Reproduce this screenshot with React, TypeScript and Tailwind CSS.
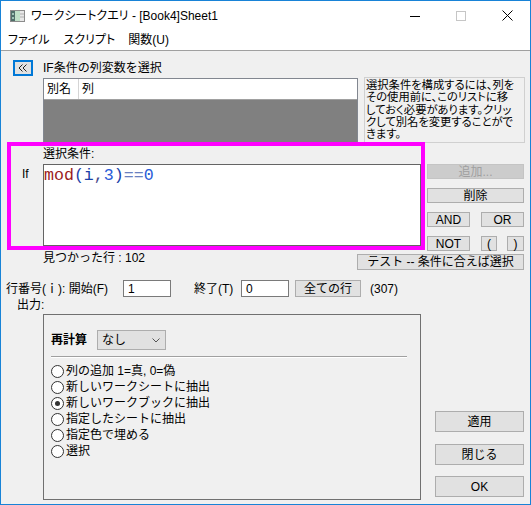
import React from "react";

const ui = "font-['Liberation_Sans','Noto_Sans_CJK_JP',sans-serif]";
const btn =
  "flex items-center justify-center bg-[#e1e1e1] border border-[#adadad] leading-none text-[12px] text-black";

function Radio({ checked, label }: { checked?: boolean; label: string }) {
  return (
    <div className="h-[16px] flex items-center">
      <span className="w-[13px] h-[13px] rounded-full border border-[#333333] bg-white flex items-center justify-center shrink-0">
        {checked && <span className="w-[5px] h-[5px] rounded-full bg-[#333333]" />}
      </span>
      <span className="ml-[2px] leading-none whitespace-nowrap">{label}</span>
    </div>
  );
}

function SheetIcon() {
  return (
    <svg width="15" height="12" viewBox="0 0 15 12">
      <rect x="0.5" y="0.5" width="14" height="11" fill="#f4f4f4" stroke="#8c8c8c" />
      <rect x="1" y="1" width="4" height="10" fill="#4f6f6a" />
      <rect x="2" y="3" width="2" height="2" fill="#9fc3b6" />
      <rect x="2" y="7" width="2" height="2" fill="#9fc3b6" />
      <rect x="5" y="1" width="5" height="10" fill="#bfe0c8" />
      <rect x="10" y="1" width="4" height="10" fill="#e8e8e8" />
      <line x1="10" y1="4" x2="14" y2="4" stroke="#b0b0b0" />
      <line x1="10" y1="7" x2="14" y2="7" stroke="#b0b0b0" />
    </svg>
  );
}

export default function App() {
  return (
    <div
      className={`relative w-[531px] h-[505px] border border-[#1883d7] bg-[#f0f0f0] text-[12px] text-black overflow-hidden flex flex-col ${ui}`}
    >
      {/* title bar */}
      <div className="h-[29px] shrink-0 bg-white flex items-center">
        <span className="ml-[9px] flex">
          <SheetIcon />
        </span>
        <span className="ml-[6px] leading-none whitespace-nowrap [font-feature-settings:'palt']">
          ワークシートクエリ - [Book4]Sheet1
        </span>
        <div className="ml-auto h-full flex">
          <div className="w-[46px] h-full flex items-center justify-center">
            <svg width="10" height="10" viewBox="0 0 10 10">
              <line x1="0" y1="5.5" x2="10" y2="5.5" stroke="#000" strokeWidth="1" />
            </svg>
          </div>
          <div className="w-[46px] h-full flex items-center justify-center">
            <svg width="10" height="10" viewBox="0 0 10 10">
              <rect x="0.5" y="0.5" width="9" height="9" fill="none" stroke="#c6c6c6" strokeWidth="1" />
            </svg>
          </div>
          <div className="w-[46px] h-full flex items-center justify-center">
            <svg width="11" height="11" viewBox="0 0 11 11">
              <path d="M0.5 0.5 L10.5 10.5 M10.5 0.5 L0.5 10.5" stroke="#000" strokeWidth="1" />
            </svg>
          </div>
        </div>
      </div>

      {/* menu bar */}
      <div className="h-[21px] shrink-0 bg-white border-b border-[#a0a0a0] flex items-center [font-feature-settings:'palt'] leading-none">
        <span className="ml-[7px]">ファイル</span>
        <span className="ml-[14px]">スクリプト</span>
        <span className="ml-[13px]">関数(U)</span>
      </div>

      {/* column picker */}
      <div className="mt-[9px] h-[16px] flex items-center">
        <div className="ml-[12px] w-[20px] h-[16px] border-2 border-[#0078d7] bg-[#e1e1e1] flex items-center justify-center">
          <svg width="10" height="8" viewBox="0 0 10 8">
            <path d="M4.5 0.5 L1 4 L4.5 7.5 M8.5 0.5 L5 4 L8.5 7.5" fill="none" stroke="#222" strokeWidth="1" />
          </svg>
        </div>
        <span className="ml-[10px] leading-none whitespace-nowrap">IF条件の列変数を選択</span>
      </div>

      <div className="mt-[1px] h-[66px] flex">
        <div className="ml-[42px] w-[315px] pt-[1px]">
          <div className="h-[65px] border border-[#828790] bg-[#808080] flex flex-col">
            <div className="h-[21px] bg-white border-b border-[#a0a0a0] flex items-center leading-none">
              <span className="w-[35px] h-full border-r border-[#d5d5d5] pl-[3px] flex items-center">別名</span>
              <span className="pl-[3px]">列</span>
            </div>
          </div>
        </div>
        <div className="ml-[6px] w-[161px] h-[66px] border border-[#d0d0d0] pl-[1px] pt-[1px] overflow-hidden text-[11.3px] leading-[12.3px] whitespace-nowrap [font-feature-settings:'palt']">
          <div>選択条件を構成するには、列を</div>
          <div>その使用前に、このリストに移</div>
          <div>しておく必要があります。クリッ</div>
          <div>クして別名を変更することがで</div>
          <div>きます。</div>
        </div>
      </div>

      {/* condition editor */}
      <div className="flex">
        <div className="w-[420px] flex">
          <div className="w-[42px] pt-[24px] pl-[21px] leading-[14px]">If</div>
          <div className="w-[378px] pt-[5px] flex flex-col">
            <div className="h-[16px] leading-[12px]">選択条件:</div>
            <div className="h-[82px] border border-[#646464] bg-white pt-[2px] font-['Liberation_Mono',monospace] text-[16.6px] leading-[18px] whitespace-nowrap">
              <span className="text-[#9a1b1b]">mod</span>
              <span className="text-[#1c3fa8]">(i</span>
              <span className="text-[#4a4a8a]">,</span>
              <span className="text-[#2a5bd7]">3</span>
              <span className="text-[#1c3fa8]">)</span>
              <span className="text-[#6a80c0]">==</span>
              <span className="text-[#2a5bd7]">0</span>
            </div>
          </div>
        </div>
        <div className="ml-[6px] w-[97px] pt-[21px] flex flex-col gap-[9px]">
          <div className="h-[15px] flex items-center justify-center bg-[#cccccc] border border-[#c4c4c4] text-[#a0a0a0] leading-none">
            追加...
          </div>
          <div className={`h-[15px] ${btn}`}>削除</div>
          <div className="h-[15px] flex justify-between">
            <div className={`w-[43px] ${btn}`}>AND</div>
            <div className={`w-[43px] ${btn}`}>OR</div>
          </div>
          <div className="h-[15px] flex">
            <div className={`w-[43px] ${btn}`}>NOT</div>
            <div className={`ml-[11px] w-[16px] ${btn}`}>(</div>
            <div className={`ml-auto w-[17px] ${btn}`}>)</div>
          </div>
        </div>
      </div>

      <div className="mt-[3px] h-[16px] flex items-start">
        <span className="ml-[42px] -mt-[3px] leading-[14px] whitespace-nowrap">見つかった行 : 102</span>
        <div className={`ml-auto mr-[6px] w-[167px] h-[16px] ${btn}`}>テスト -- 条件に合えば選択</div>
      </div>

      {/* row range */}
      <div className="mt-[10px] h-[17px] flex items-center leading-none whitespace-nowrap">
        <span className="ml-[5px] w-[117px]">行番号(ｉ): 開始(F)</span>
        <div className="w-[48px] h-[17px] border border-[#7a7a7a] bg-white pl-[4px] flex items-center">1</div>
        <span className="ml-[23px] w-[47px]">終了(T)</span>
        <div className="w-[48px] h-[17px] border border-[#7a7a7a] bg-white pl-[4px] flex items-center">0</div>
        <div className={`ml-[6px] w-[66px] h-[17px] ${btn}`}>全ての行</div>
        <span className="ml-[9px]">(307)</span>
      </div>

      {/* output options */}
      <div className="flex-1 flex">
        <div className="w-[420px] flex flex-col">
          <div className="h-[17px] leading-[17px] pl-[16px]">出力:</div>
          <div className="ml-[42px] w-[378px] h-[186px] border border-[#707070] pt-[15px] px-[7px]">
            <div className="h-[20px] flex items-center">
              <span className="w-[46px] font-bold leading-none whitespace-nowrap">再計算</span>
              <div className="w-[69px] h-[20px] bg-[#e1e1e1] border border-[#adadad] flex items-center pl-[4px] leading-none">
                <span>なし</span>
                <svg className="ml-auto mr-[5px]" width="8" height="5" viewBox="0 0 8 5">
                  <path d="M0.5 0.5 L4 4 L7.5 0.5" fill="none" stroke="#555" strokeWidth="1" />
                </svg>
              </div>
            </div>
            <div className="mt-[6px] w-[356px] border-t border-b border-t-[#a0a0a0] border-b-white" />
            <div className="mt-[5px] flex flex-col">
              <Radio label="列の追加 1=真, 0=偽" />
              <Radio label="新しいワークシートに抽出" />
              <Radio checked label="新しいワークブックに抽出" />
              <Radio label="指定したシートに抽出" />
              <Radio label="指定色で埋める" />
              <Radio label="選択" />
            </div>
          </div>
        </div>
        <div className="ml-[14px] w-[89px] flex flex-col justify-end pb-[7px]">
          <div className={`h-[21px] ${btn}`}>適用</div>
          <div className={`mt-[12px] h-[21px] ${btn}`}>閉じる</div>
          <div className={`mt-[11px] h-[21px] ${btn}`}>OK</div>
        </div>
      </div>

      {/* highlight frame around the condition editor */}
      <div className="absolute left-[6px] top-[141px] w-[418px] h-[108px] border-4 border-[#ff00ff] pointer-events-none" />
    </div>
  );
}
